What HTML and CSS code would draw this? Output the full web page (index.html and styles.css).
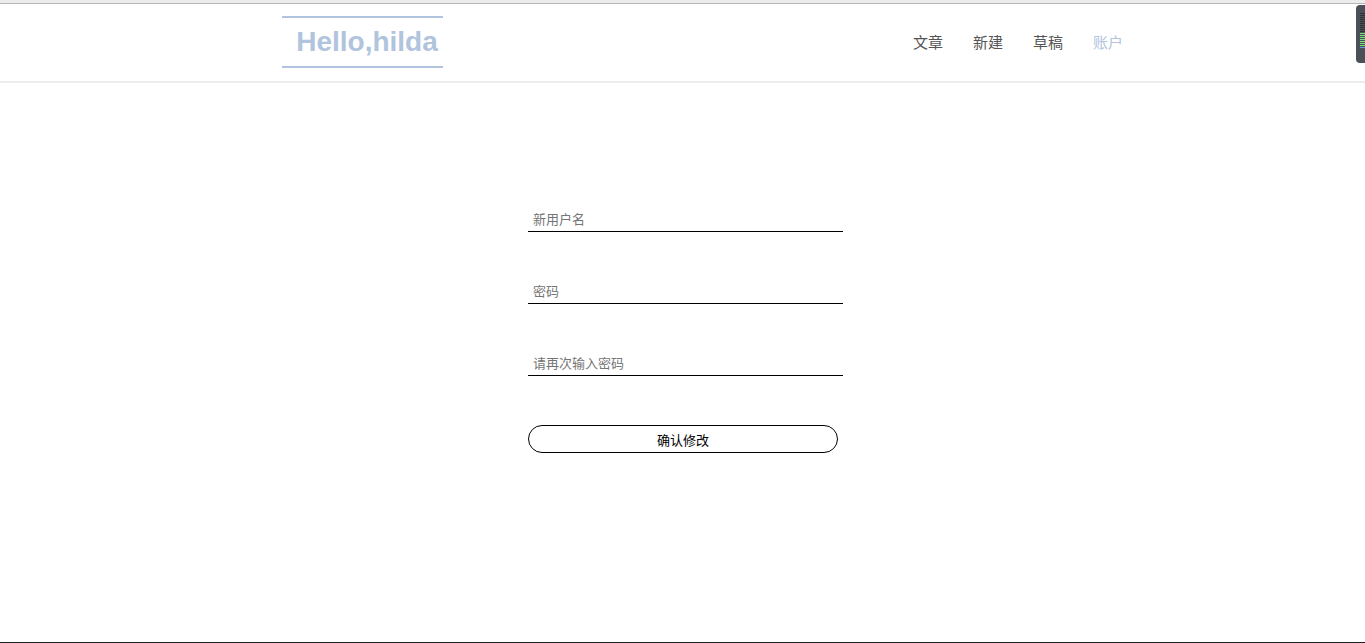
FILE: index.html
```html
<!DOCTYPE html>
<html lang="zh">
<head>
<meta charset="utf-8">
<title>账户</title>
<link rel="stylesheet" href="styles.css">
</head>
<body>
<header class="header">
  <div class="header-inner">
    <div class="logo">Hello,hilda</div>
    <nav class="nav">
      <a class="nav-item">文章</a>
      <a class="nav-item">新建</a>
      <a class="nav-item">草稿</a>
      <a class="nav-item active">账户</a>
    </nav>
  </div>
</header>
<main class="main">
  <form class="form">
    <input class="field" type="text" placeholder="新用户名">
    <input class="field" type="password" placeholder="密码">
    <input class="field" type="password" placeholder="请再次输入密码">
    <button class="submit" type="button">确认修改</button>
  </form>
</main>
<div class="meter"><span></span><span></span><span></span><span></span><span></span><span></span><span></span><span></span><span></span><span></span><span class="g"></span><span class="g"></span><span class="g"></span><span class="g"></span><span class="g"></span><span class="g"></span><span class="g"></span><span class="b"></span></div>
<div class="bottom-bar"></div>
</body>
</html>
```
FILE: styles.css
```css
html, body {
  margin: 0;
  padding: 0;
  height: 100%;
  background: #fff;
}
body {
  font-family: "Microsoft YaHei", "Noto Sans CJK SC", "Liberation Sans", sans-serif;
  border-top: 3px solid #ececec;
  box-sizing: border-box;
  position: relative;
  overflow: hidden;
}
.header {
  border-top: 1px solid #b4b4b4;
  border-bottom: 2px solid #ececec;
  height: 80px;
  box-sizing: border-box;
}
.header-inner {
  width: 841px;
  margin-left: 282px;
  display: flex;
  align-items: center;
  justify-content: space-between;
  height: 100%;
  box-sizing: border-box;
  padding-bottom: 2px;
}
.logo {
  width: 161px;
  height: 52px;
  box-sizing: border-box;
  border-top: 2px solid #b0c4de;
  border-bottom: 2px solid #b0c4de;
  color: #b0c4de;
  font-family: "Liberation Sans", Arial, sans-serif;
  font-weight: bold;
  font-size: 28px;
  display: flex;
  align-items: center;
  justify-content: center;
  padding-left: 9px;
  padding-top: 1px;
}
.nav {
  display: flex;
  gap: 30px;
}
.nav-item {
  font-size: 15px;
  color: #555;
  cursor: pointer;
}
.nav-item.active {
  color: #b0c4de;
}
.main {
  display: flex;
  justify-content: center;
  padding-top: 123px;
}
.form {
  width: 315px;
  margin-left: 6px;
  display: flex;
  flex-direction: column;
}
.field {
  border: none;
  border-bottom: 1px solid #000;
  outline: none;
  height: 25px;
  padding: 0 5px;
  font-size: 13px;
  font-family: inherit;
  margin-bottom: 46px;
  color: #333;
}
.field::placeholder {
  color: #757575;
}
.submit {
  width: 310px;
  height: 28px;
  margin-top: 3px;
  border: 1px solid #000;
  border-radius: 14px;
  background: #fff;
  font-size: 13px;
  font-family: inherit;
  color: #000;
  padding: 0;
}
.meter {
  position: absolute;
  right: 0;
  top: 2px;
  width: 9px;
  height: 58px;
  background: #4b5058;
  border-radius: 4px 0 0 4px;
  display: flex;
  flex-direction: column;
  gap: 1px;
  padding: 8px 0 4px 4px;
  box-sizing: border-box;
}
.meter span {
  display: block;
  height: 1px;
  width: 5px;
  background: #2e3238;
}
.meter span.g { background: #7be07b; }
.meter span.b { background: #5aa0e0; }
.bottom-bar {
  position: absolute;
  left: 0;
  right: 0;
  bottom: 0;
  height: 1px;
  background: #1c1f24;
}
```
